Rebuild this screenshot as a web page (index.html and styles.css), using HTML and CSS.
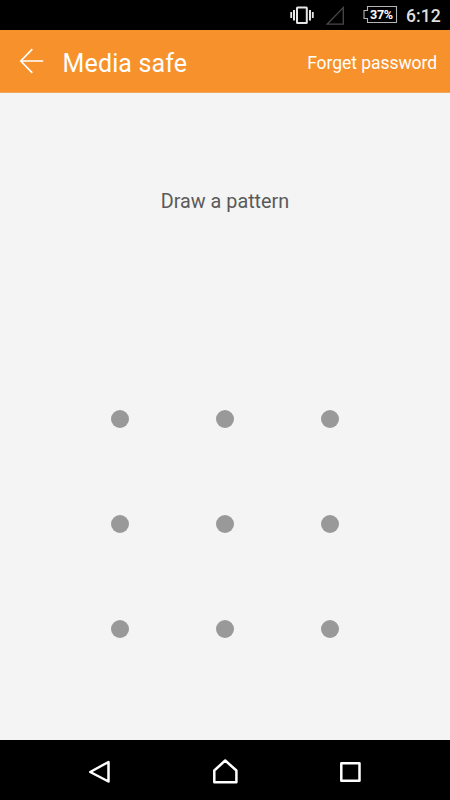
FILE: index.html
```html
<!DOCTYPE html>
<html lang="en">
<head>
    <meta charset="UTF-8">
    <title>Media safe</title>
    <meta name="viewport" content="width=device-width, initial-scale=1.0">
    <link rel="stylesheet" href="styles.css">
</head>
<body>
    <div class="status-bar">
        <svg class="vibrate" width="24" height="30" viewBox="0 0 24 30" fill="none" stroke="#e6e6e6">
            <rect x="7" y="7.5" width="9.8" height="15.5" rx="0.5" stroke-width="2"/>
            <path d="M4 10v10.5M20 10v10.5" stroke-width="2"/>
            <path d="M1.2 12v6M22.8 12v6" stroke-width="1.8"/>
        </svg>
        <svg class="signal" width="20" height="30" viewBox="0 0 20 30" fill="none" stroke="#484848" stroke-width="1.3">
            <path d="M1 24.2L17.3 7.6V24.2Z"/>
        </svg>
        <div class="battery">
            <svg width="35" height="30" viewBox="0 0 35 30" fill="none" stroke="#b5b5b5" stroke-width="1.1">
                <path d="M4.5 6.5H33.5V22.5H4.5V18.5H1V10.5H4.5Z"/>
            </svg>
            <span>37%</span>
        </div>
        <span class="time">6:12</span>
    </div>

    <div class="header">
        <svg class="back" width="26" height="26" viewBox="0 0 26 26" fill="none" stroke="#fff" stroke-width="1.7">
            <path d="M13.3 1.2L1.8 13L13.3 24.8M1.8 13H24.2"/>
        </svg>
        <h1>Media safe</h1>
        <a class="forget">Forget password</a>
    </div>

    <div class="content">
        <p class="hint">Draw a pattern</p>
        <div class="pattern">
            <i></i><i></i><i></i>
            <i></i><i></i><i></i>
            <i></i><i></i><i></i>
        </div>
    </div>

    <div class="nav-bar">
        <svg width="30" height="30" viewBox="0 0 30 30"><path d="M23.5 5V24.5L5.2 15Z"/></svg>
        <svg width="30" height="30" viewBox="0 0 30 30"><path d="M4.3 25.3V13.5L15.2 3.5L26.4 13.5V25.3Z"/></svg>
        <svg width="30" height="30" viewBox="0 0 30 30"><path d="M6.3 6.3H24.5V23.7H6.3Z"/></svg>
    </div>
</body>
</html>
```

FILE: styles.css
```css
* { box-sizing: border-box; }
body { margin: 0; height: 800px; display: flex; flex-direction: column; font-family: Roboto, sans-serif; background: #f4f4f4; overflow: hidden; }
svg { display: block; flex: none; }

.status-bar { height: 30px; display: flex; align-items: center; padding-left: 290px; background: #000; color: #dedede; }
.signal { margin-left: 12px; }
.battery { position: relative; margin-left: 17px; width: 35px; height: 30px; }
.battery span { position: absolute; left: 7px; top: 0; color: #fff; font-size: 12.6px; font-weight: bold; line-height: 30px; letter-spacing: -0.3px; }
.time { margin: 2px 0 0 8px; font-size: 17.6px; font-weight: 500; line-height: 32px; }

.header { height: 63px; display: flex; align-items: center; padding: 0 13px 0 19px; background: #f7912c; border-bottom: 1px solid #f3a75a; color: #fff; }
.header h1 { margin: 5px 0 0 17.5px; font-size: 25px; font-weight: 400; line-height: 30px; letter-spacing: 0.15px; }
.forget { margin: 3px 0 0 auto; font-size: 17.5px; line-height: 24px; letter-spacing: -0.05px; }

.content { flex: 1; display: flex; flex-direction: column; align-items: center; }
.hint { margin: 97px 0 0; height: 24px; font-size: 19.8px; line-height: 24px; color: #5a5a5a; }
.pattern { display: grid; grid-template-columns: repeat(3, 18px); gap: 87px; margin-top: 195.5px; }
.pattern i { width: 18px; height: 18px; border-radius: 50%; background: #999; }

.nav-bar { height: 60px; display: flex; align-items: center; justify-content: center; gap: 95px; padding-top: 4px; background: #000; }
.nav-bar path { fill: none; stroke: #fff; stroke-width: 2.5; stroke-linejoin: round; }
```
